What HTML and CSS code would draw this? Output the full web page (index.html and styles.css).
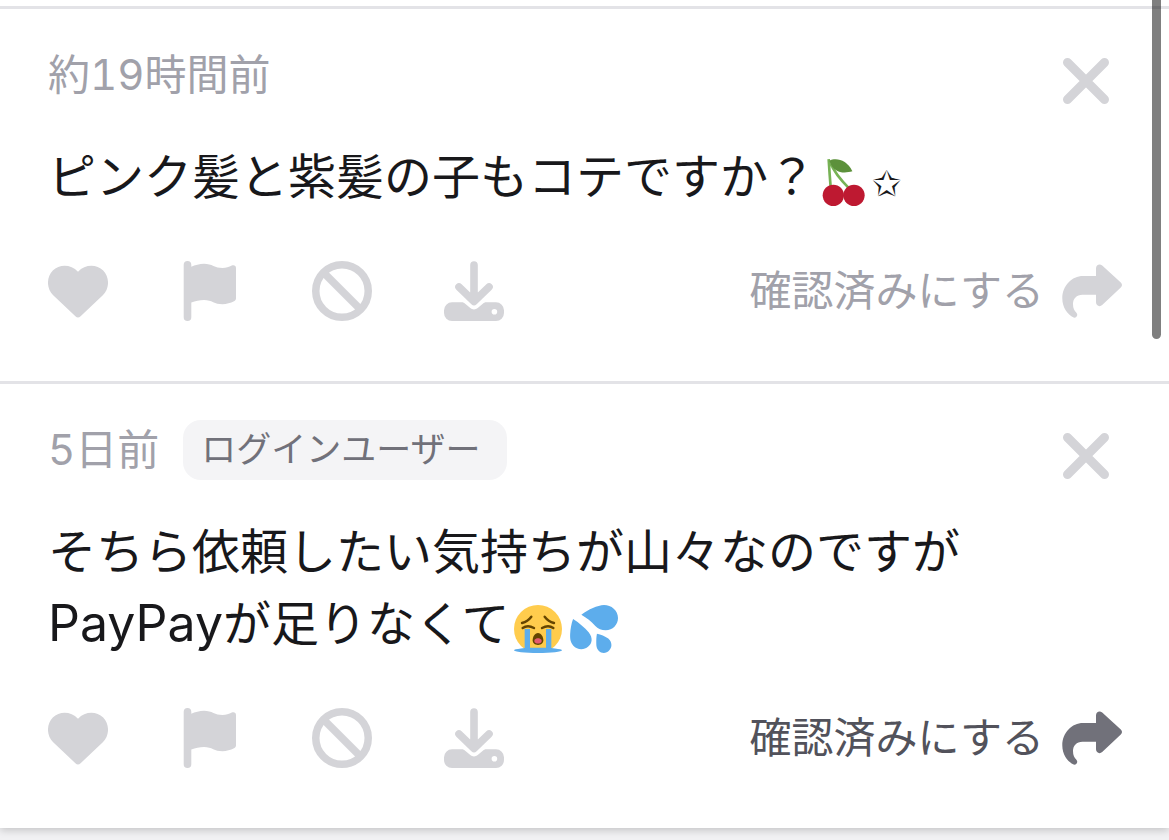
FILE: index.html
```html
<!DOCTYPE html>
<html lang="ja">
<head>
    <meta charset="UTF-8">
    <meta name="viewport" content="width=device-width, initial-scale=1.0">
    <title>メッセージ</title>
    <link rel="stylesheet" href="styles.css">
</head>
<body>
    <!-- shared icons -->
    <svg class="sprite" aria-hidden="true">
        <symbol id="close" viewBox="0 0 48 48">
            <path d="M5.5 5.5 42.5 42.5M42.5 5.5 5.5 42.5" fill="none" stroke="currentColor" stroke-width="9" stroke-linecap="round"/>
        </symbol>
        <symbol id="heart" viewBox="0 0 60 60">
            <path d="M27.4 55.3 5.2 34.2C-1.6 27.5-1.8 16.6 4.8 9.6 11.5 3 22.8 3 30 10.8 37.2 3 48.5 3 55.2 9.6c6.6 7 6.4 17.9-.4 24.6L32.6 55.3a3.8 3.8 0 0 1-5.2 0z" fill="currentColor"/>
        </symbol>
        <symbol id="flag" viewBox="0 0 60 60">
            <path d="M3.7 3.8a3.8 3.8 0 0 1 7.6 0v2C15 4 19.500 2.700 24 2.700 32 2.700 35 7 42.500 7c3.500 0 6.500-1 9.300-2.400C54 3.600 56 4.700 56 7v30.200c0 1.400-.7 2.500-2 3.100-3.300 1.700-7.500 2.900-11.500 2.900-8 0-10.500-4.300-18.500-4.300-4.500 0-8.500 1-12.700 2.600v14.700a3.800 3.800 0 0 1-7.600 0z" fill="currentColor"/>
        </symbol>
        <symbol id="ban" viewBox="0 0 60 60">
            <g fill="none" stroke="currentColor" stroke-width="7.5">
                <circle cx="30" cy="30" r="26.250"/>
                <path d="M12 12 48 48"/>
            </g>
        </symbol>
        <symbol id="download" viewBox="0 0 60 60">
            <path d="M30 4V39M15 26 30 40.500 45 26" fill="none" stroke="currentColor" stroke-width="7.600" stroke-linecap="round" stroke-linejoin="round"/>
            <path d="M8 41.300H17.500c1.800 0 2.800.5 4 1.600l4.500 3.900c2.700 2.200 5.300 2.200 8 0l4.500-3.900c1.200-1.100 2.200-1.600 4-1.600H52a8 8 0 0 1 8 8V52a8 8 0 0 1-8 8H8a8 8 0 0 1-8-8V49.300a8 8 0 0 1 8-8zM50.400 47.900a2.800 2.800 0 1 0 0 5.600 2.800 2.800 0 0 0 0-5.600z" fill="currentColor" fill-rule="evenodd"/>
        </symbol>
        <symbol id="share" viewBox="0 0 60 60">
            <path d="M34 15V7.500c0-3.500 3.600-5.200 6.200-2.900L58.800 21.500c1.600 1.500 1.600 3.500 0 5L40.200 44.100C37.600 46.400 34 44.700 34 41.300V33.700H20.500c-6 0-9.500 4-9.500 9.300 0 4.500 1.400 6.700 3.200 8.400 2.300 2.300.6 5.800-2.600 5.200C5.500 53.500.3 46.500.3 37.500.3 24.500 10 15 21 15z" fill="currentColor"/>
        </symbol>
    </svg>

    <main class="list">
        <article class="item">
            <header class="item-head">
                <time class="time">約19時間前</time>
                <button class="icon-btn close" type="button" aria-label="閉じる"><svg><use href="#close"/></svg></button>
            </header>
            <p class="message">ピンク髪と紫髪の子もコテですか？<svg class="emoji" viewBox="0 0 36 36" role="img" aria-label="さくらんぼ">
                <path d="M6.500.800C7 9 7.500 16 8 22M8 4C11 12 17 18 22 23" fill="none" stroke="#77b255" stroke-width="2"/>
                <path d="M7 2c5-2.500 13-1 17.300 8-6 1.500-14 2-17.300-8z" fill="#5c913b"/>
                <circle cx="10" cy="28" r="8" fill="#be1931"/>
                <circle cx="25.500" cy="28" r="8" fill="#be1931"/>
            </svg><span class="star">✩</span></p>
            <footer class="actions">
                <div class="tools">
                    <button class="icon-btn" type="button" aria-label="いいね"><svg><use href="#heart"/></svg></button>
                    <button class="icon-btn" type="button" aria-label="報告"><svg><use href="#flag"/></svg></button>
                    <button class="icon-btn" type="button" aria-label="ブロック"><svg><use href="#ban"/></svg></button>
                    <button class="icon-btn" type="button" aria-label="保存"><svg><use href="#download"/></svg></button>
                </div>
                <button class="confirm" type="button">確認済みにする<svg><use href="#share"/></svg></button>
            </footer>
        </article>

        <article class="item">
            <header class="item-head">
                <time class="time">5日前</time>
                <span class="badge">ログインユーザー</span>
                <button class="icon-btn close" type="button" aria-label="閉じる"><svg><use href="#close"/></svg></button>
            </header>
            <p class="message">そちら依頼したい気持ちが山々なのですが<br><span class="latin">PayPay</span>が足りなくて<svg class="emoji" viewBox="0 0 36 36" role="img" aria-label="大泣き">
                <circle cx="18" cy="18" r="18" fill="#ffcc4d"/>
                <ellipse cx="18" cy="34" rx="18" ry="2" fill="#5dadec"/>
                <path d="M8 18h4v16H8zM24 18h4v16h-4z" fill="#5dadec"/>
                <path d="M6.500 17.300c2.300-1.600 5.600-1.600 8.500 0M21 17.300c2.900-1.600 6.200-1.600 8.500 0M6 13.500c3.500-.9 5.500-2.700 7-4.700M30 13.500c-3.500-.9-5.500-2.700-7-4.700" fill="none" stroke="#664500" stroke-width="1.800" stroke-linecap="round"/>
                <path d="M18 21c-2.500 0-4 3-4 5.500 0 2 1.500 3.500 4 3.500s4-1.500 4-3.500c0-2.500-1.500-5.500-4-5.500z" fill="#664500"/>
                <path d="M15.300 26.300c1.200-1.700 4.200-1.700 5.400 0v1.200c-.4 1.800-5 1.800-5.400 0z" fill="#e75a70"/>
            </svg><svg class="emoji" viewBox="0 0 36 36" role="img" aria-label="汗">
                <g fill="#5dadec">
                    <path d="M8.500 7.300C14 3 20.500.5 25.500 0 31 0 36 4 36 9.800c0 5-4 9.200-9.200 9.200-3.300 0-5.500-1-7.800-3.200C16 12.500 12.500 9.500 8.500 7.300z"/>
                    <path d="M2.300 10.500C7 13.500 11 17 14 20.500c3.500 4.500 2.500 8.500-.3 10.700-3.500 3-8.500 2.300-11.200-.7C.2 28 0 25 .1 22 .3 18 1 14 2.300 10.500z"/>
                    <path d="M20.200 21.500c3 .6 6 1.800 8.500 3.700 3 2.600 3 6.400.8 8.800-2.200 2.500-5.800 2.600-8 .3-1.500-1.600-1.800-3.500-1.800-5.800 0-2.500 0-4.500.5-7z"/>
                </g>
            </svg></p>
            <footer class="actions">
                <div class="tools">
                    <button class="icon-btn" type="button" aria-label="いいね"><svg><use href="#heart"/></svg></button>
                    <button class="icon-btn" type="button" aria-label="報告"><svg><use href="#flag"/></svg></button>
                    <button class="icon-btn" type="button" aria-label="ブロック"><svg><use href="#ban"/></svg></button>
                    <button class="icon-btn" type="button" aria-label="保存"><svg><use href="#download"/></svg></button>
                </div>
                <button class="confirm active" type="button">確認済みにする<svg><use href="#share"/></svg></button>
            </footer>
        </article>
    </main>
    <div class="scroll-thumb"></div>
</body>
</html>
```
FILE: styles.css
```css
* {
    box-sizing: border-box;
}
body {
    margin: 0;
    min-height: 100vh;
    background-color: #f1f1f3;
    color: #18181b;
    font-family: Inter, "Noto Sans CJK JP", sans-serif;
}
button {
    padding: 0;
    border: none;
    background: none;
    font-family: inherit;
    cursor: pointer;
}
.sprite {
    position: absolute;
    width: 0;
    height: 0;
}
.list {
    padding-top: 6px;
    background-color: #fff;
    box-shadow: 0 2px 8px rgba(0,0,0,0.2);
}
.item {
    padding: 36px 47px 60px 48px;
    border-top: 3px solid #e3e3e7;
}
.item-head {
    display: flex;
    align-items: center;
    gap: 24px;
    height: 60px;
}
.time {
    color: #a1a1aa;
    font-size: 42px;
    line-height: 60px;
    font-variant-numeric: tabular-nums;
}
.badge {
    height: 60px;
    padding: 0 26px 0 18px;
    border-radius: 18px;
    background-color: #f4f4f6;
    color: #71717a;
    font-size: 35px;
    line-height: 58px;
}
.icon-btn {
    width: 60px;
    height: 60px;
    color: #d4d4d8;
}
.icon-btn svg, .confirm svg {
    display: block;
    width: 100%;
    height: 100%;
}
.close {
    align-self: flex-end;
    width: 48px;
    height: 48px;
    margin: 0 12px 0 auto;
}
.message {
    margin: 36px 0 48px;
    font-size: 48px;
    line-height: 72px;
}
.latin {
    font-size: 50px;
    line-height: 60px;
}
.emoji {
    width: 48px;
    height: 48px;
    margin: 0 4px;
    vertical-align: -12px;
}
.star {
    font-family: "DejaVu Sans", sans-serif;
    font-size: 35px;
    line-height: 48px;
    vertical-align: -2px;
}
.actions {
    display: flex;
    justify-content: space-between;
    align-items: center;
}
.tools {
    display: flex;
    gap: 72px;
}
.confirm {
    display: flex;
    align-items: center;
    gap: 18px;
    color: #a1a1aa;
    font-size: 42px;
    line-height: 60px;
}
.confirm svg {
    width: 60px;
    height: 60px;
    color: #d4d4d8;
}
.confirm.active {
    color: #52525b;
}
.confirm.active svg {
    color: #71717a;
}
.scroll-thumb {
    position: fixed;
    top: -12px;
    right: 8px;
    width: 9px;
    height: 351px;
    border-radius: 5px;
    background-color: rgba(0,0,0,0.5);
}
```
